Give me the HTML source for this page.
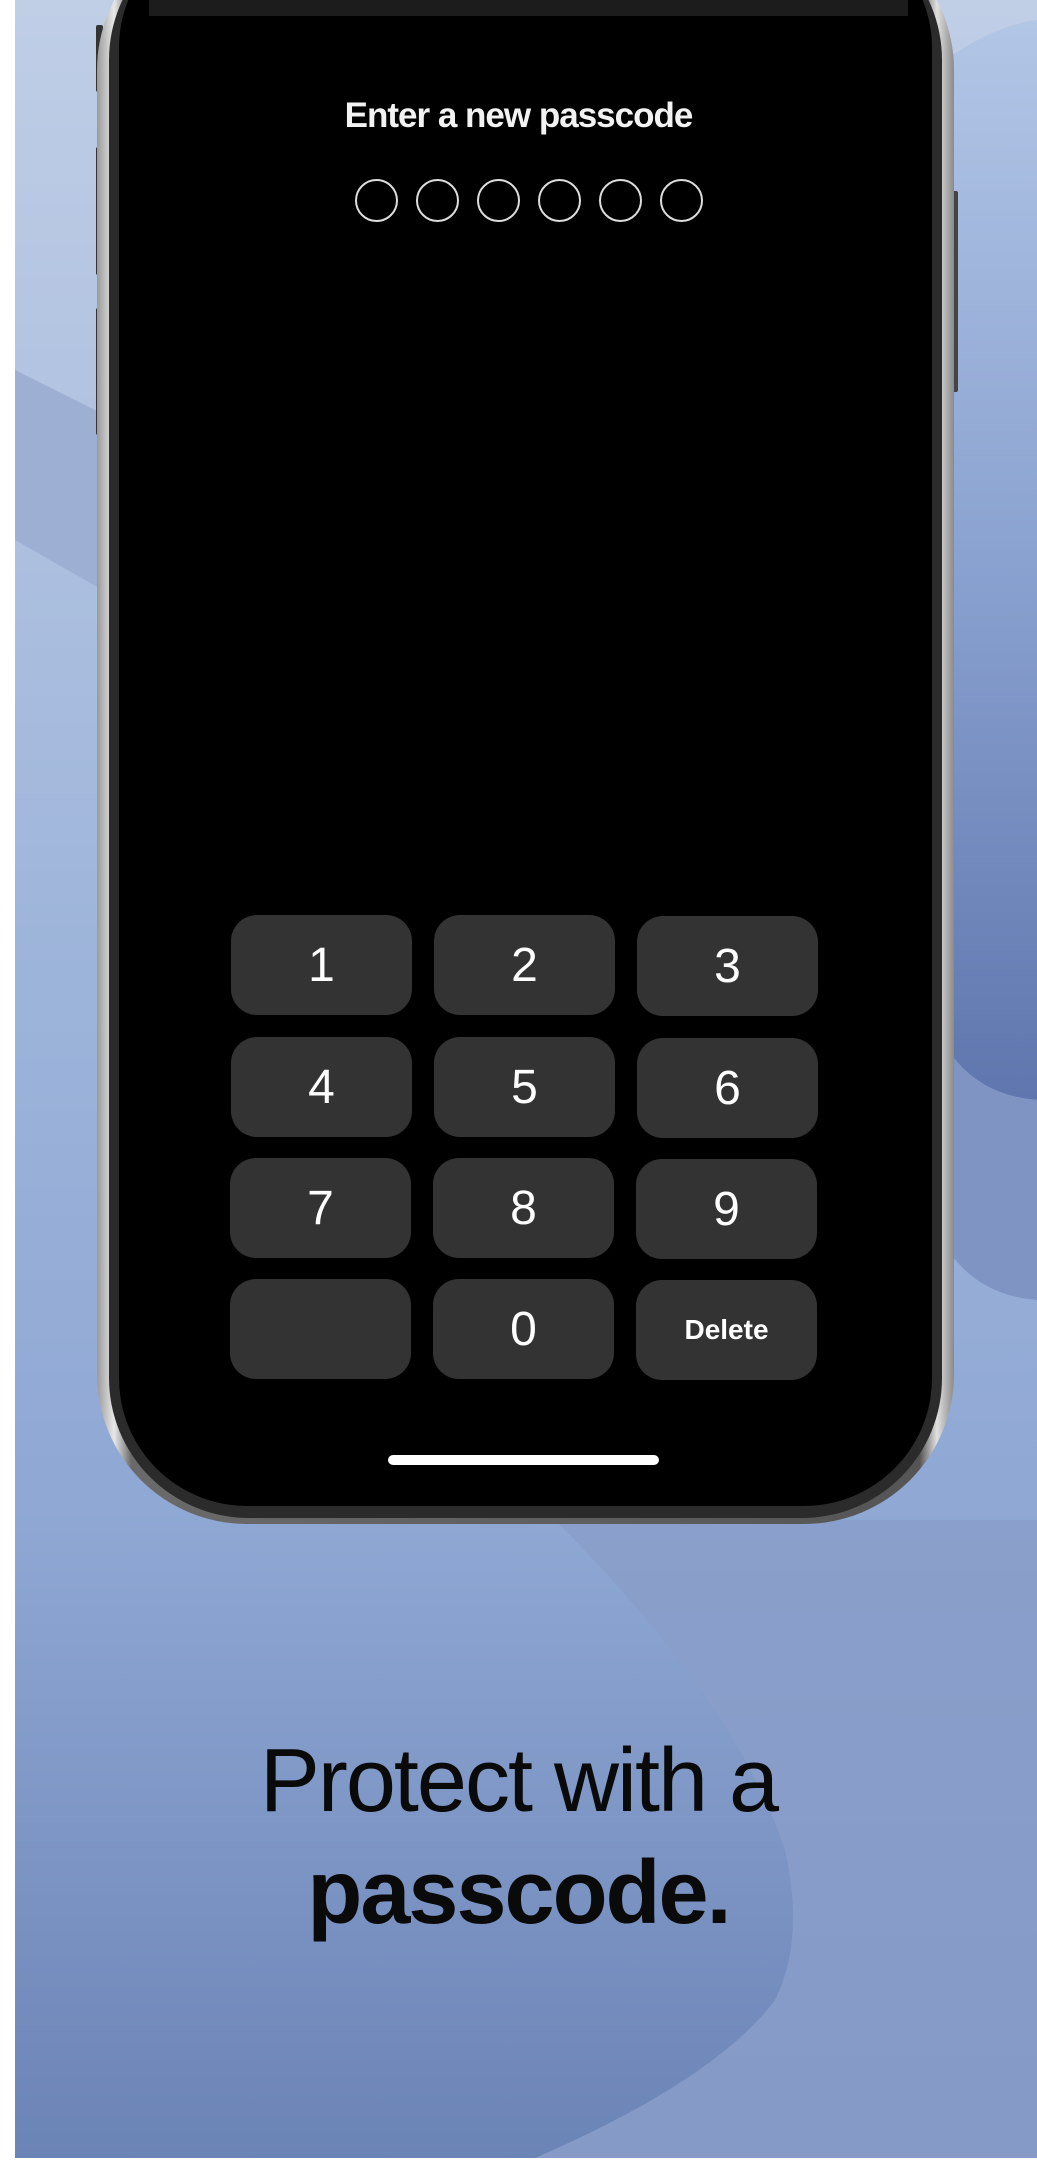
<!DOCTYPE html>
<html><head><meta charset="utf-8"><style>
html,body{margin:0;padding:0}
body{width:1037px;height:2162px;position:relative;overflow:hidden;background:#fff;font-family:"Liberation Sans",sans-serif}
.bg{position:absolute;left:15px;top:0;width:1022px;height:2158px}
.phone{position:absolute;left:97px;top:-80px;width:857px;height:1604px;border-radius:150px;background:linear-gradient(90deg,#9a9a9a,#e8e8e8 2%,#6a6a6a 4%,#555 96%,#e0e0e0 98%,#8a8a8a);}
.p2{position:absolute;left:12px;top:0;right:12px;bottom:6px;border-radius:140px;background:#2b2b2b}
.p3{position:absolute;left:10px;top:0;right:10px;bottom:12px;border-radius:128px;background:#000}
.btn{position:absolute;left:96px;width:7px;background:#333;border-radius:2px}
.key{position:absolute;width:181px;height:100px;border-radius:26px;background:#333;color:#fff;font-size:48px;display:flex;align-items:center;justify-content:center}
.dot{position:absolute;top:179px;width:39px;height:39px;border:2px solid #ddd;border-radius:50%}
</style></head><body>
<svg class="bg" viewBox="0 0 1022 2158" preserveAspectRatio="none">
<defs>
<linearGradient id="g" x1="0" y1="0" x2="0" y2="1"><stop offset="0" stop-color="#c0cee6"/><stop offset="0.45" stop-color="#9db4da"/><stop offset="0.7" stop-color="#8fa8d4"/><stop offset="1" stop-color="#6b84b6"/></linearGradient>
<linearGradient id="r" x1="0" y1="0" x2="0" y2="1"><stop offset="0" stop-color="#b2c6e6"/><stop offset="0.5" stop-color="#8aa2d0"/><stop offset="1" stop-color="#5f76ae"/></linearGradient>
</defs>
<rect width="1022" height="2158" fill="url(#g)"/>
<path d="M0 370 L140 440 L140 620 L0 540Z" fill="#9db0d4"/>
<path d="M930 60 Q980 25 1022 20 L1022 1100 Q960 1095 930 1045Z" fill="url(#r)"/>
<path d="M930 1045 Q960 1095 1022 1100 L1022 1300 Q960 1295 930 1245Z" fill="#8094c4"/>
<path d="M540 1520 Q720 1700 770 1850 Q790 1940 760 2000 Q700 2080 520 2158 L1022 2158 L1022 1520Z" fill="#8a9dc9" opacity="0.85"/>
</svg>
<div class="btn" style="top:25px;height:67px"></div>
<div class="btn" style="top:147px;height:128px"></div>
<div class="btn" style="top:308px;height:127px"></div>
<div style="position:absolute;left:950px;top:191px;width:8px;height:201px;background:#444;border-radius:2px"></div>
<div class="phone"><div class="p2"><div class="p3"></div></div></div>
<div style="position:absolute;left:149px;top:0;width:759px;height:16px;background:#1c1c1c"></div>
<div style="position:absolute;left:0;width:1037px;top:96px;text-align:center;color:#f2f2f2;font-size:35px;font-weight:bold;letter-spacing:-1px">Enter a new passcode</div>
<div class="dot" style="left:355px"></div><div class="dot" style="left:416px"></div><div class="dot" style="left:477px"></div><div class="dot" style="left:538px"></div><div class="dot" style="left:599px"></div><div class="dot" style="left:660px"></div>
<div class="key" style="left:231px;top:915px">1</div><div class="key" style="left:434px;top:915px">2</div><div class="key" style="left:637px;top:916px">3</div>
<div class="key" style="left:231px;top:1037px">4</div><div class="key" style="left:434px;top:1037px">5</div><div class="key" style="left:637px;top:1038px">6</div>
<div class="key" style="left:230px;top:1158px">7</div><div class="key" style="left:433px;top:1158px">8</div><div class="key" style="left:636px;top:1159px">9</div>
<div class="key" style="left:230px;top:1279px"></div><div class="key" style="left:433px;top:1279px">0</div><div class="key" style="left:636px;top:1280px;font-size:28px;font-weight:bold">Delete</div>
<div style="position:absolute;left:388px;top:1455px;width:271px;height:10px;border-radius:5px;background:#fff"></div>
<div style="position:absolute;left:0;width:1037px;top:1725px;text-align:center;font-size:90px;letter-spacing:-2px;line-height:112px;color:#0a0a0a">Protect with a<br><b>passcode.</b></div>
<div style="position:absolute;left:0;bottom:0;width:1037px;height:4px;background:#fff"></div>
</body></html>
